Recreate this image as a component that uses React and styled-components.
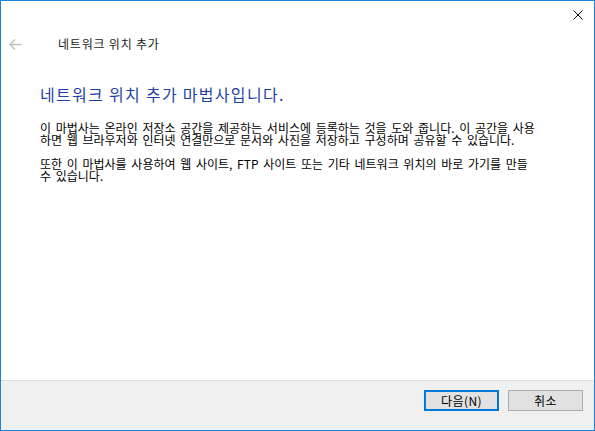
import React from 'react';
import styled, { createGlobalStyle } from 'styled-components';

const GlobalStyle = createGlobalStyle`
	html, body {
		margin: 0;
		padding: 0;
		background: #ffffff;
	}
	body {
		font-family: 'Noto Sans CJK KR', 'Noto Sans', sans-serif;
	}
`;

const Window = styled.div`
	box-sizing: border-box;
	width: 595px;
	height: 431px;
	border: 1px solid #1883d7;
	background: #ffffff;
	display: flex;
	flex-direction: column;
	overflow: hidden;
`;

const TitleBar = styled.div`
	height: 29px;
	display: flex;
	justify-content: flex-end;
	align-items: flex-start;
	padding-right: 11px;
`;

const CloseButton = styled.div`
	margin-top: 9px;
	width: 10px;
	height: 10px;
	display: flex;
`;

const NavRow = styled.div`
	height: 28px;
	display: flex;
	align-items: center;
	padding-left: 8px;
`;

const BackArrow = styled.div`
	width: 13px;
	height: 11px;
	display: flex;
	margin-right: 36px;
`;

const NavTitle = styled.span`
	font-size: 12px;
	color: #1a1a1a;
	line-height: 16px;
	letter-spacing: 0.8px;
`;

const Content = styled.div`
	padding-left: 39px;
	padding-top: 26px;
`;

const Heading = styled.h1`
	margin: 0 0 18px 0;
	font-size: 16px;
	line-height: 20px;
	font-weight: 400;
	letter-spacing: 1.3px;
	color: #1f3fa8;
`;

const Paragraph = styled.p`
	margin: 0 0 12px 0;
	font-size: 12px;
	line-height: 12px;
	word-spacing: 2px;
	color: #000000;
	white-space: nowrap;
`;

const Footer = styled.div`
	margin-top: auto;
	height: 40px;
	border-top: 1px solid #dfdfdf;
	background: #f0f0f0;
	display: flex;
	justify-content: flex-end;
	align-items: flex-start;
	padding: 9px 11px 0 0;
	gap: 9px;
`;

const Button = styled.button`
	box-sizing: border-box;
	width: 75px;
	height: 21px;
	padding: 0;
	margin: 0;
	background: #e1e1e1;
	border: ${(p) => (p.$primary ? '2px solid #0078d7' : '1px solid #adadad')};
	font-family: 'Noto Sans CJK KR', 'Noto Sans', sans-serif;
	font-size: 12px;
	line-height: 16px;
	letter-spacing: 0.4px;
	color: #000000;
	display: flex;
	align-items: center;
	justify-content: center;
`;

export default function App() {
	return (
		<>
			<GlobalStyle />
			<Window>
				<TitleBar>
					<CloseButton>
						<svg width='10' height='10' viewBox='0 0 10 10'>
							<path d='M0.5 0.5 L9.5 9.5 M9.5 0.5 L0.5 9.5' stroke='#000' strokeWidth='1' />
						</svg>
					</CloseButton>
				</TitleBar>
				<NavRow>
					<BackArrow>
						<svg width='13' height='11' viewBox='0 0 13 11'>
							<path
								d='M1 5.5 H12.5 M6 0.5 L1 5.5 L6 10.5'
								stroke='#bfbfbf'
								strokeWidth='1.4'
								fill='none'
							/>
						</svg>
					</BackArrow>
					<NavTitle>네트워크 위치 추가</NavTitle>
				</NavRow>
				<Content>
					<Heading>네트워크 위치 추가 마법사입니다.</Heading>
					<Paragraph>
						이 마법사는 온라인 저장소 공간을 제공하는 서비스에 등록하는 것을 도와 줍니다. 이 공간을 사용
						<br />
						하면 웹 브라우저와 인터넷 연결만으로 문서와 사진을 저장하고 구성하며 공유할 수 있습니다.
					</Paragraph>
					<Paragraph>
						또한 이 마법사를 사용하여 웹 사이트, FTP 사이트 또는 기타 네트워크 위치의 바로 가기를 만들
						<br />수 있습니다.
					</Paragraph>
				</Content>
				<Footer>
					<Button $primary>다음(N)</Button>
					<Button>취소</Button>
				</Footer>
			</Window>
		</>
	);
}
